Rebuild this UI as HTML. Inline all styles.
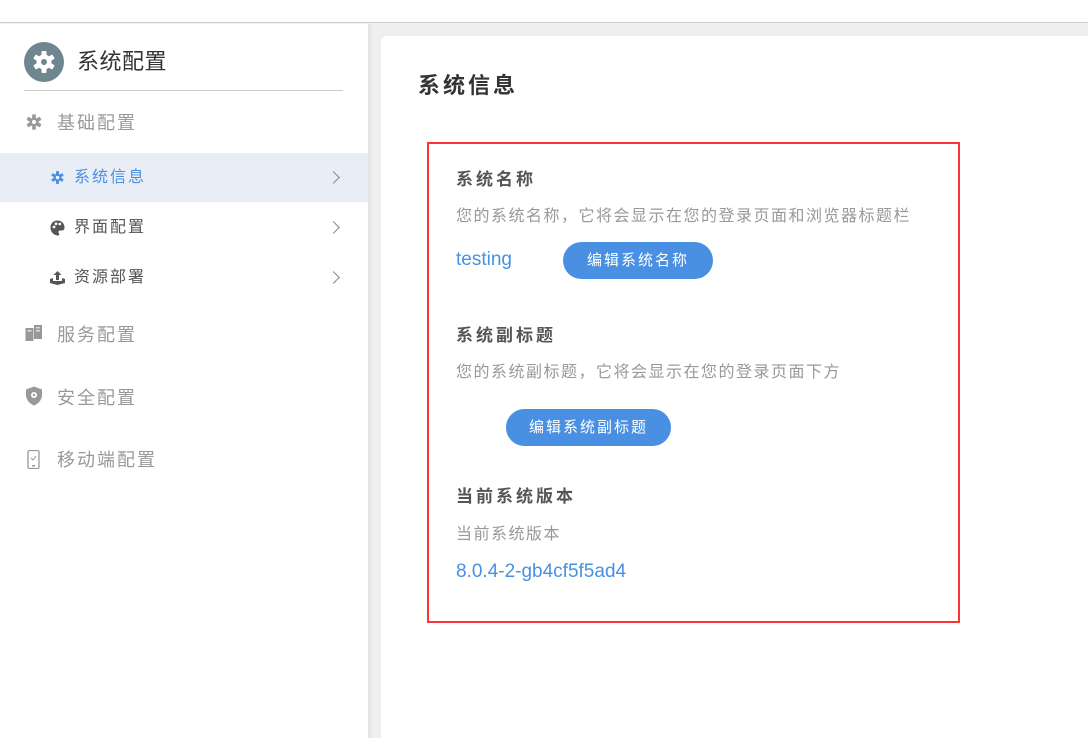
<!DOCTYPE html>
<html><head><meta charset="utf-8"><style>
*{margin:0;padding:0;box-sizing:border-box}
html,body{width:1088px;height:738px;overflow:hidden}
body{background:#efefef;font-family:"Liberation Sans","Noto Sans CJK SC",sans-serif;position:relative}
.top{position:absolute;left:0;top:0;width:1088px;height:23px;background:#fff;border-bottom:1px solid #ccc}
.side{position:absolute;left:0;top:24px;width:368px;height:714px;background:#fff}
.strip{position:absolute;left:368px;top:24px;width:13px;height:714px;background:linear-gradient(to right,#e2e2e2,#efefef 40%)}
.card{position:absolute;left:381px;top:36px;width:707px;height:702px;background:#fff;border-radius:6px 0 0 0}
.a{position:absolute;white-space:nowrap;line-height:1}
.red{position:absolute;left:427px;top:142px;width:533px;height:481px;border:2px solid #f33}
.btn{position:absolute;background:#4a90e2;color:#fff;border-radius:19px;font-size:15px;letter-spacing:2px;text-align:center}
.chev{position:absolute;left:329px;width:9px;height:9px;border-right:1px solid #888;border-top:1px solid #888;transform:rotate(45deg)}
</style></head><body>
<div class="top"></div>
<div class="side"></div>
<div class="strip"></div>
<div class="card"></div>
<div style="position:absolute;left:0;top:153px;width:368px;height:49px;background:#e9eef6"></div>
<svg style="position:absolute;left:24px;top:42px" width="40" height="40" viewBox="0 0 40 40"><circle cx="20" cy="20" r="20" fill="#6f8590"/><g fill="#fff"><circle cx="20" cy="20" r="7.5"/><rect x="17.5" y="9" width="5" height="22" rx="1"/><rect x="17.5" y="9" width="5" height="22" rx="1" transform="rotate(60 20 20)"/><rect x="17.5" y="9" width="5" height="22" rx="1" transform="rotate(120 20 20)"/></g><circle cx="20" cy="20" r="3" fill="#6f8590"/></svg>
<div class="a" style="left:77px;top:51px;font-size:22px;color:#333;letter-spacing:0.5px">系统配置</div>
<div style="position:absolute;left:24px;top:90px;width:319px;height:1px;background:#ccc"></div>
<svg style="position:absolute;left:25px;top:113px" width="18" height="18" viewBox="0 0 40 40"><g fill="#999"><circle cx="20" cy="20" r="10"/><rect x="16" y="3" width="8" height="34" rx="1"/><rect x="16" y="3" width="8" height="34" rx="1" transform="rotate(60 20 20)"/><rect x="16" y="3" width="8" height="34" rx="1" transform="rotate(120 20 20)"/></g><circle cx="20" cy="20" r="4.5" fill="#fff"/></svg>
<div class="a" style="left:57px;top:114px;font-size:18px;color:#999;letter-spacing:2px">基础配置</div>
<svg style="position:absolute;left:50px;top:170px" width="15" height="15" viewBox="0 0 40 40"><g fill="#4a90e2"><circle cx="20" cy="20" r="10"/><rect x="16" y="3" width="8" height="34" rx="1"/><rect x="16" y="3" width="8" height="34" rx="1" transform="rotate(60 20 20)"/><rect x="16" y="3" width="8" height="34" rx="1" transform="rotate(120 20 20)"/></g><circle cx="20" cy="20" r="4.5" fill="#fff"/></svg>
<div class="a" style="left:74px;top:170px;font-size:16px;color:#4a90e2;letter-spacing:2px">系统信息</div>
<div class="chev" style="top:173px"></div>
<svg style="position:absolute;left:50px;top:220px" width="15" height="16" viewBox="0 0 15 16"><path d="M7.5 0.5C3.5 0.5 0.5 3.5 0.5 7.5 0.5 12 4 15.5 8 15.5 9.5 15.5 9.5 14 8.7 13 8 12 8.5 10.5 10 10.5H12C13.8 10.5 14.5 9 14.5 7.5 14.5 3.5 11.5 0.5 7.5 0.5Z" fill="#555"/><circle cx="4" cy="7" r="1.4" fill="#fff"/><circle cx="6" cy="3.8" r="1.4" fill="#fff"/><circle cx="9.8" cy="4" r="1.4" fill="#fff"/></svg>
<div class="a" style="left:74px;top:220px;font-size:16px;color:#555;letter-spacing:2px">界面配置</div>
<div class="chev" style="top:223px"></div>
<svg style="position:absolute;left:49px;top:270px" width="17" height="16" viewBox="0 0 17 16"><path d="M8.5 1L4.5 5H7V10H10V5H12.5Z" fill="#555"/><path d="M1 9L4 8V11H13V8L16 9V13L8.5 15 1 13Z" fill="#555"/></svg>
<div class="a" style="left:74px;top:270px;font-size:16px;color:#555;letter-spacing:2px">资源部署</div>
<div class="chev" style="top:273px"></div>
<svg style="position:absolute;left:25px;top:325px" width="18" height="17" viewBox="0 0 18 17"><rect x="0.5" y="3" width="8" height="13" fill="#999"/><rect x="9" y="0" width="8" height="14" fill="#999"/><rect x="11" y="2" width="4" height="1.5" fill="#cde"/><rect x="11" y="5" width="4" height="1.5" fill="#cde"/><rect x="2.5" y="5" width="4" height="1.5" fill="#ddd"/></svg>
<div class="a" style="left:57px;top:326px;font-size:18px;color:#999;letter-spacing:2px">服务配置</div>
<svg style="position:absolute;left:25px;top:386px" width="18" height="20" viewBox="0 0 18 20"><path d="M9 0.5L17 3.5V9C17 14 13 18 9 19.5 5 18 1 14 1 9V3.5Z" fill="#999"/><circle cx="9" cy="9" r="3" fill="#fff"/><circle cx="9" cy="9" r="1.2" fill="#999"/></svg>
<div class="a" style="left:57px;top:389px;font-size:18px;color:#999;letter-spacing:2px">安全配置</div>
<svg style="position:absolute;left:27px;top:450px" width="13" height="19" viewBox="0 0 13 19"><rect x="1" y="0.5" width="11" height="18" rx="1.5" fill="none" stroke="#999" stroke-width="1.3"/><path d="M4 8L6 10 9 6" fill="none" stroke="#999" stroke-width="1"/><rect x="5" y="15" width="3" height="1.5" fill="#999"/></svg>
<div class="a" style="left:57px;top:451px;font-size:18px;color:#999;letter-spacing:2px">移动端配置</div>

<div class="a" style="left:418px;top:75px;font-size:22px;font-weight:bold;color:#333;letter-spacing:3px">系统信息</div>
<div class="red"></div>
<div class="a" style="left:456px;top:171px;font-size:17px;font-weight:bold;color:#555;letter-spacing:3px">系统名称</div>
<div class="a" style="left:456px;top:209px;font-size:16px;color:#999;letter-spacing:1.5px">您的系统名称，它将会显示在您的登录页面和浏览器标题栏</div>
<div class="a" style="left:456px;top:250px;font-size:19px;color:#4a90e2">testing</div>
<div class="btn" style="left:563px;top:242px;width:150px;height:37px;line-height:37px">编辑系统名称</div>
<div class="a" style="left:456px;top:327px;font-size:17px;font-weight:bold;color:#555;letter-spacing:3px">系统副标题</div>
<div class="a" style="left:456px;top:365px;font-size:16px;color:#999;letter-spacing:1.5px">您的系统副标题，它将会显示在您的登录页面下方</div>
<div class="btn" style="left:506px;top:409px;width:165px;height:37px;line-height:37px">编辑系统副标题</div>
<div class="a" style="left:456px;top:488px;font-size:17px;font-weight:bold;color:#555;letter-spacing:3px">当前系统版本</div>
<div class="a" style="left:456px;top:527px;font-size:16px;color:#999;letter-spacing:1.5px">当前系统版本</div>
<div class="a" style="left:456px;top:562px;font-size:19px;color:#4a90e2">8.0.4-2-gb4cf5f5ad4</div>
</body></html>
